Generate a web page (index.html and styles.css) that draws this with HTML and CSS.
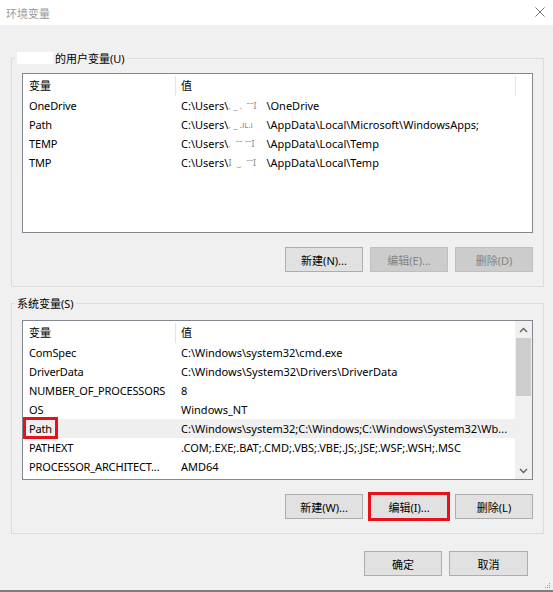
FILE: index.html
```html
<!DOCTYPE html>
<html lang="zh-CN">
<head>
    <meta charset="UTF-8">
    <title>环境变量</title>
    <link rel="stylesheet" href="styles.css">
</head>
<body>
    <div class="window">
        <div class="titlebar">
            <span class="title">环境变量</span>
            <svg class="close" width="10" height="10" viewBox="0 0 10 10">
                <path d="M0.5 0.5 L9.5 9.5 M9.5 0.5 L0.5 9.5" stroke="#777" stroke-width="1" fill="none"/>
            </svg>
        </div>

        <div class="content">
            <fieldset class="group group-user">
                <legend><span class="redacted"></span>的用户变量(U)</legend>
                <div class="list">
                    <div class="list-main">
                        <div class="list-head">
                            <div class="hcell">变量</div>
                            <div class="hcell">值</div>
                            <div class="hcell hcell-last"></div>
                        </div>
                        <div class="row"><div class="cell">OneDrive</div><div class="cell cell-val">C:\Users\<span class="smear">.&nbsp;_ .&nbsp;&nbsp;ˉˉI</span>\OneDrive</div></div>
                        <div class="row"><div class="cell">Path</div><div class="cell cell-val">C:\Users\<span class="smear">.&nbsp;_ .ıʟ.ı</span>\AppData\Local\Microsoft\WindowsApps;</div></div>
                        <div class="row"><div class="cell">TEMP</div><div class="cell cell-val">C:\Users\<span class="smear">.&nbsp;&nbsp;ˉˉ ˉˉI</span>\AppData\Local\Temp</div></div>
                        <div class="row"><div class="cell">TMP</div><div class="cell cell-val">C:\Users\<span class="smear">I&nbsp; ‿&nbsp;&nbsp;ˉˉI</span>\AppData\Local\Temp</div></div>
                    </div>
                </div>
                <div class="buttons">
                    <button class="btn">新建(N)...</button>
                    <button class="btn" disabled>编辑(E)...</button>
                    <button class="btn" disabled>删除(D)</button>
                </div>
            </fieldset>

            <fieldset class="group group-sys">
                <legend>系统变量(S)</legend>
                <div class="list">
                    <div class="list-main">
                        <div class="list-head">
                            <div class="hcell">变量</div>
                            <div class="hcell hcell-open">值</div>
                        </div>
                        <div class="row"><div class="cell">ComSpec</div><div class="cell cell-val">C:\Windows\system32\cmd.exe</div></div>
                        <div class="row"><div class="cell">DriverData</div><div class="cell cell-val">C:\Windows\System32\Drivers\DriverData</div></div>
                        <div class="row"><div class="cell">NUMBER_OF_PROCESSORS</div><div class="cell cell-val">8</div></div>
                        <div class="row"><div class="cell">OS</div><div class="cell cell-val">Windows_NT</div></div>
                        <div class="row row-selected"><div class="cell cell-marked">Path<span class="mark"></span></div><div class="cell cell-val">C:\Windows\system32;C:\Windows;C:\Windows\System32\Wb...</div></div>
                        <div class="row"><div class="cell">PATHEXT</div><div class="cell cell-val">.COM;.EXE;.BAT;.CMD;.VBS;.VBE;.JS;.JSE;.WSF;.WSH;.MSC</div></div>
                        <div class="row"><div class="cell">PROCESSOR_ARCHITECT...</div><div class="cell cell-val">AMD64</div></div>
                    </div>
                    <div class="scrollbar">
                        <div class="arrow">
                            <svg width="9" height="6" viewBox="0 0 9 6"><path d="M1 5 L4.5 1.5 L8 5" stroke="#606060" stroke-width="1.4" fill="none"/></svg>
                        </div>
                        <div class="track">
                            <div class="thumb"></div>
                        </div>
                        <div class="arrow">
                            <svg width="9" height="6" viewBox="0 0 9 6"><path d="M1 1 L4.5 4.5 L8 1" stroke="#606060" stroke-width="1.4" fill="none"/></svg>
                        </div>
                    </div>
                </div>
                <div class="buttons">
                    <button class="btn">新建(W)...</button>
                    <button class="btn btn-marked">编辑(I)...</button>
                    <button class="btn">删除(L)</button>
                </div>
            </fieldset>

            <div class="footer">
                <button class="btn btn-ok">确定</button>
                <button class="btn btn-cancel">取消</button>
            </div>
        </div>

        <div class="bottom-edge"></div>
        <svg class="grip" width="6" height="6" viewBox="0 0 6 6">
            <rect x="4" y="0" width="1" height="1" fill="#999"/>
            <rect x="2" y="2" width="1" height="1" fill="#999"/>
            <rect x="4" y="2" width="1" height="1" fill="#999"/>
            <rect x="0" y="4" width="1" height="1" fill="#999"/>
            <rect x="2" y="4" width="1" height="1" fill="#999"/>
            <rect x="4" y="4" width="1" height="1" fill="#999"/>
        </svg>
    </div>
</body>
</html>
```

FILE: styles.css
```css
* {
    box-sizing: border-box;
}
body {
    margin: 0;
    font-family: "Noto Sans", "Noto Sans CJK SC", sans-serif;
    font-size: 11px;
    color: #000;
    background-color: #f0f0f0;
}
.window {
    position: relative;
    width: 553px;
    height: 592px;
    display: flex;
    flex-direction: column;
    overflow: hidden;
    background-color: #f0f0f0;
}
.titlebar {
    height: 25px;
    flex-shrink: 0;
    background: #fff;
    display: flex;
    align-items: center;
    justify-content: space-between;
    padding: 0 8px 0 6px;
}
.title {
    color: #9a9a9a;
    font-size: 11px;
}
.close {
    margin-top: -1px;
}
.content {
    flex: 1;
    padding: 25px 9px 0 11px;
}
.group {
    margin: 0;
    border: 1px solid #dcdcdc;
    padding: 6px 10px 14px;
    min-width: 0;
}
.group legend {
    margin-left: -7px;
    padding: 0 2px;
    line-height: 17px;
}
.group-sys {
    margin-top: 8px;
    padding-top: 8px;
}
.redacted {
    display: inline-block;
    width: 36px;
    height: 12px;
    background: #fff;
    vertical-align: -1px;
    margin-right: 2px;
}
.list {
    height: 160px;
    border: 1px solid #828790;
    background: #fff;
    display: flex;
}
.list-main {
    flex: 1;
    min-width: 0;
}
.list-head {
    display: grid;
    grid-template-columns: 153px 340px 1fr;
    height: 22px;
}
.hcell {
    line-height: 23px;
    padding-left: 6px;
    position: relative;
}
.hcell::after {
    content: "";
    position: absolute;
    right: 0;
    top: 2px;
    bottom: 1px;
    width: 1px;
    background: #e5e5e5;
}
.hcell + .hcell {
    padding-left: 5px;
}
.hcell-last::after,
.hcell-open::after {
    display: none;
}
.row {
    display: grid;
    grid-template-columns: 153px 1fr;
    height: 19px;
    line-height: 20px;
}
.row-selected {
    background: #efefef;
}
.cell {
    padding-left: 6px;
    white-space: nowrap;
    overflow: hidden;
    letter-spacing: -0.15px;
}
.cell-val {
    padding-left: 5px;
    letter-spacing: 0;
}
.cell-marked {
    position: relative;
    overflow: visible;
}
.smear {
    display: inline-block;
    width: 38px;
    color: #8a8a8a;
    font-size: 9px;
    overflow: hidden;
    vertical-align: top;
}
.mark {
    position: absolute;
    left: 0;
    top: -2px;
    width: 35px;
    height: 22px;
    border: 3px solid #e8101a;
}
.scrollbar {
    width: 17px;
    flex-shrink: 0;
    background: #f0f0f0;
    display: flex;
    flex-direction: column;
}
.arrow {
    height: 17px;
    display: flex;
    align-items: center;
    justify-content: center;
}
.track {
    flex: 1;
    padding: 0 1px;
}
.thumb {
    height: 58px;
    background: #cdcdcd;
}
.buttons {
    display: flex;
    justify-content: flex-end;
    gap: 7px;
    margin-top: 14px;
}
.btn {
    width: 78px;
    height: 25px;
    padding: 0;
    border: 1px solid #adadad;
    background: #e1e1e1;
    font-family: "Noto Sans", "Noto Sans CJK SC", sans-serif;
    font-size: 11px;
    color: #000;
}
.btn:disabled {
    background: #cccccc;
    border-color: #bfbfbf;
    color: #838383;
}
.btn-marked {
    outline: 3px solid #e8101a;
    outline-offset: -1px;
}
.footer {
    display: flex;
    justify-content: flex-end;
    gap: 7px;
    margin-top: 17px;
    padding-right: 16px;
}
.btn-cancel {
    width: 79px;
}
.bottom-edge {
    height: 2px;
    flex-shrink: 0;
    background: #7d7d7d;
}
.grip {
    position: absolute;
    right: 2px;
    bottom: 3px;
}
```
